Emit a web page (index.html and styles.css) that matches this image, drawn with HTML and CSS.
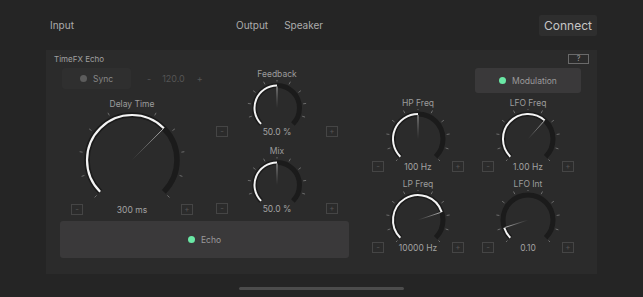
FILE: index.html
```html
<!DOCTYPE html>
<html lang="en">
<head>
    <meta charset="UTF-8">
    <meta name="viewport" content="width=device-width, initial-scale=1.0">
    <title>TimeFX Echo</title>
    <link rel="stylesheet" href="styles.css">
</head>
<body>

    <div class="topbar">
        <span class="route route-input">Input</span>
        <span class="route">Output</span>
        <span class="route route-speaker">Speaker</span>
        <button class="connect">Connect</button>
    </div>

    <div class="panel">
        <div class="panel-head">
            <span class="panel-title">TimeFX Echo</span>
            <span class="help">?</span>
        </div>

        <div class="panel-body">
            <div class="left">
                <div class="left-top">
                    <div class="delay-col">
                        <div class="sync-row">
                            <div class="toggle sync"><span class="dot"></span>Sync</div>
                            <span class="bpm-step bpm-minus">-</span>
                            <span class="bpm">120.0</span>
                            <span class="bpm-step bpm-plus">+</span>
                        </div>

                        <!-- big delay knob -->
                        <div class="group group-delay">
                            <div class="label">Delay Time</div>
                            <div class="knob" data-w="122" data-h="94" data-cy="50" data-r="45" data-v="0.667" data-tin="5" data-tout="8"></div>
                            <div class="controls">
                                <span class="step">-</span>
                                <span class="value">300 ms</span>
                                <span class="step">+</span>
                            </div>
                        </div>
                    </div>

                    <div class="mix-col">
                        <div class="group group-small">
                            <div class="label">Feedback</div>
                            <div class="knob" data-w="122" data-h="46" data-cy="28" data-r="22.5" data-v="0.5" data-tin="4" data-tout="7"></div>
                            <div class="controls">
                                <span class="step">-</span>
                                <span class="value">50.0 %</span>
                                <span class="step">+</span>
                            </div>
                        </div>
                        <div class="group group-small group-mix">
                            <div class="label">Mix</div>
                            <div class="knob" data-w="122" data-h="46" data-cy="28" data-r="22.5" data-v="0.5" data-tin="4" data-tout="7"></div>
                            <div class="controls">
                                <span class="step">-</span>
                                <span class="value">50.0 %</span>
                                <span class="step">+</span>
                            </div>
                        </div>
                    </div>
                </div>

                <div class="toggle echo"><span class="dot dot-on"></span>Echo</div>
            </div>

            <div class="right">
                <div class="toggle modulation"><span class="dot dot-on"></span>Modulation</div>

                <div class="filters">
                    <div class="group group-filter">
                        <div class="label">HP Freq</div>
                        <div class="knob" data-w="92" data-h="52" data-cy="30" data-r="25" data-v="0.5" data-tin="4" data-tout="7"></div>
                        <div class="controls">
                            <span class="step">-</span>
                            <span class="value">100 Hz</span>
                            <span class="step">+</span>
                        </div>
                    </div>
                    <div class="group group-filter">
                        <div class="label">LFO Freq</div>
                        <div class="knob" data-w="92" data-h="52" data-cy="30" data-r="25" data-v="0.655" data-tin="4" data-tout="7"></div>
                        <div class="controls">
                            <span class="step">-</span>
                            <span class="value">1.00 Hz</span>
                            <span class="step">+</span>
                        </div>
                    </div>
                    <div class="group group-filter">
                        <div class="label">LP Freq</div>
                        <div class="knob" data-w="92" data-h="52" data-cy="30" data-r="25" data-v="0.765" data-tin="4" data-tout="7"></div>
                        <div class="controls">
                            <span class="step">-</span>
                            <span class="value">10000 Hz</span>
                            <span class="step">+</span>
                        </div>
                    </div>
                    <div class="group group-filter">
                        <div class="label">LFO Int</div>
                        <div class="knob" data-w="92" data-h="52" data-cy="30" data-r="25" data-v="0.10" data-tin="4" data-tout="7"></div>
                        <div class="controls">
                            <span class="step">-</span>
                            <span class="value">0.10</span>
                            <span class="step">+</span>
                        </div>
                    </div>
                </div>
            </div>
        </div>
    </div>

    <div class="home-bar"></div>

    <script>
        // draws every knob from its data-* attributes
        function pt(cx, cy, r, deg) {
            const a = deg * Math.PI / 180;
            return [cx + r * Math.sin(a), cy - r * Math.cos(a)];
        }

        function arc(cx, cy, r, from, to) {
            const p1 = pt(cx, cy, r, from);
            const p2 = pt(cx, cy, r, to);
            const large = (to - from) > 180 ? 1 : 0;
            return `M${p1[0].toFixed(2)} ${p1[1].toFixed(2)} A${r} ${r} 0 ${large} 1 ${p2[0].toFixed(2)} ${p2[1].toFixed(2)}`;
        }

        document.querySelectorAll('.knob').forEach(function(el, i) {
            const w = +el.dataset.w, h = +el.dataset.h;
            const cx = w / 2, cy = +el.dataset.cy, r = +el.dataset.r;
            const v = +el.dataset.v;
            const tin = +el.dataset.tin, tout = +el.dataset.tout;
            const big = r > 40;
            const angle = -135 + 270 * v;

            let svg = `<svg width="${w}" height="${h}" viewBox="0 0 ${w} ${h}">`;
            svg += `<defs><linearGradient id="ptr${i}" gradientUnits="userSpaceOnUse"`;
            const tip = pt(cx, cy, r - 1, angle);
            svg += ` x1="${cx}" y1="${cy}" x2="${tip[0]}" y2="${tip[1]}">`;
            svg += `<stop offset="0" stop-color="#8a8a8a" stop-opacity="0"/><stop offset="1" stop-color="#b5b5b5"/></linearGradient></defs>`;

            for (let t = 0; t < 11; t++) {
                const d = -135 + t * 27;
                const a = pt(cx, cy, r + tin, d), b = pt(cx, cy, r + tout, d);
                svg += `<line x1="${a[0]}" y1="${a[1]}" x2="${b[0]}" y2="${b[1]}" class="tick"/>`;
            }

            svg += `<path d="${arc(cx, cy, r, -135, 135)}" class="track ${big ? 'track-big' : ''}"/>`;
            svg += `<path d="${arc(cx, cy, r, -135, angle)}" class="fill ${big ? 'fill-big' : ''}"/>`;
            svg += `<line x1="${cx}" y1="${cy}" x2="${tip[0]}" y2="${tip[1]}" stroke="url(#ptr${i})" class="pointer"/>`;
            svg += '</svg>';
            el.innerHTML = svg;
        });
    </script>
</body>
</html>
```

FILE: styles.css
```css
body {
    margin: 0;
    background-color: #252525;
    font-family: Inter, "Noto Sans", sans-serif;
    color: #a4a4a4;
    height: 297px;
    overflow: hidden;
}
.topbar {
    display: flex;
    align-items: center;
    height: 50px;
    padding: 0 46px 0 50px;
}
.route {
    font-size: 10px;
    color: #acacac;
}
.route-input {
    width: 186px;
}
.route-speaker {
    margin-left: 16px;
}
.connect {
    margin-left: auto;
    width: 58px;
    height: 21px;
    padding: 0;
    border: none;
    border-radius: 2px;
    background-color: #2e2e2e;
    color: #c6c6c6;
    font-family: inherit;
    font-size: 12px;
}
.panel {
    margin-left: 46px;
    width: 551px;
    height: 224px;
    box-sizing: border-box;
    padding: 4px 8px 0 8px;
    background-color: #2b2b2b;
}
.panel-head {
    display: flex;
    align-items: center;
    justify-content: space-between;
    height: 10px;
    margin-bottom: 4px;
}
.panel-title {
    font-size: 8px;
    color: #a0a0a0;
}
.help {
    width: 19px;
    height: 8px;
    border: 1px solid #6a6a6a;
    font-size: 7px;
    line-height: 8px;
    text-align: center;
    color: #a0a0a0;
}
.panel-body {
    display: flex;
    padding-left: 6px;
}
.left {
    width: 289px;
}
.left-top {
    display: flex;
}
.delay-col {
    width: 150px;
}
.mix-col {
    margin-left: 6px;
    width: 122px;
}
.sync-row {
    display: flex;
    align-items: center;
    height: 21px;
    margin-bottom: 9px;
}
.toggle {
    display: flex;
    align-items: center;
    justify-content: center;
    border-radius: 3px;
    font-size: 8.5px;
    color: #9a9a9a;
}
.dot {
    width: 7px;
    height: 7px;
    border-radius: 50%;
    margin-right: 6px;
    background-color: #5c5c5c;
}
.dot-on {
    background-color: #6ae8a5;
}
.sync {
    width: 69px;
    height: 21px;
    margin-left: 2px;
    background-color: #2f2f2f;
    color: #878787;
}
.bpm-step, .bpm {
    font-size: 9px;
    color: #555555;
}
.bpm-minus {
    margin-left: 16px;
}
.bpm {
    margin-left: 11px;
}
.bpm-plus {
    margin-left: 12px;
}
.group {
    display: flex;
    flex-direction: column;
}
.group-delay {
    margin-left: 11px;
    width: 122px;
}
.group-mix {
    margin-top: 8px;
}
.label {
    height: 12px;
    line-height: 12px;
    text-align: center;
    font-size: 8.5px;
    color: #9c9c9c;
}
.knob {
    display: flex;
    justify-content: center;
}
.knob svg {
    display: block;
}
.tick {
    stroke: #6c6c6c;
    stroke-width: 1;
}
.track {
    fill: none;
    stroke: #1b1b1b;
    stroke-width: 5;
}
.track-big {
    stroke-width: 5.5;
}
.fill {
    fill: none;
    stroke: #f4f4f4;
    stroke-width: 2;
}
.fill-big {
    stroke-width: 2.2;
}
.pointer {
    stroke-width: 1;
}
.controls {
    display: flex;
    align-items: center;
    justify-content: space-between;
    height: 11px;
}
.step {
    width: 10px;
    height: 9px;
    border: 1px solid #454545;
    font-size: 8px;
    line-height: 9px;
    text-align: center;
    color: #555555;
}
.value {
    font-size: 8.5px;
    color: #a2a2a2;
}
.echo {
    margin-top: 6px;
    height: 37px;
    background-color: #3a393a;
}
.right {
    margin-left: 23px;
    width: 209px;
    display: flex;
    flex-direction: column;
}
.modulation {
    align-self: flex-end;
    width: 106px;
    height: 25px;
    margin-bottom: 4px;
    background-color: #3a393a;
}
.filters {
    display: grid;
    grid-template-columns: 92px 92px;
    column-gap: 18px;
    row-gap: 6px;
}
.home-bar {
    width: 165px;
    height: 3px;
    margin: 13px auto 0;
    border-radius: 2px;
    background-color: #4c4c4c;
}
```
